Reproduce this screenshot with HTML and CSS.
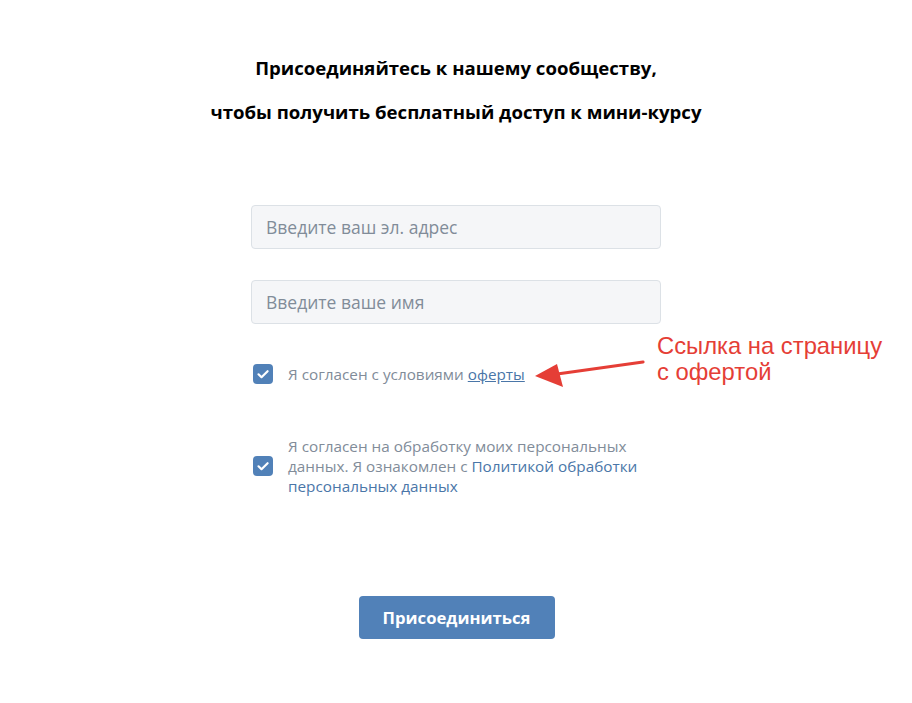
FILE: index.html
```html
<!DOCTYPE html>
<html lang="ru">
<head>
<meta charset="utf-8">
<link rel="stylesheet" href="styles.css">
</head>
<body>
<div class="page">
  <div class="title">
    <p>Присоединяйтесь к нашему сообществу,</p>
    <p>чтобы получить бесплатный доступ к мини-курсу</p>
  </div>
  <form class="form">
    <div class="field">Введите ваш эл. адрес</div>
    <div class="field second">Введите ваше имя</div>
    <div class="check one">
      <span class="box"><svg width="20" height="20" viewBox="0 0 20 20"><path d="M5.5 10.3l3 2.9L14.6 7.2" fill="none" stroke="#fff" stroke-width="2.2" stroke-linecap="round" stroke-linejoin="round"/></svg></span>
      <span class="label">Я согласен с условиями <a class="u">оферты</a></span>
    </div>
    <div class="check two">
      <span class="box"><svg width="20" height="20" viewBox="0 0 20 20"><path d="M5.5 10.3l3 2.9L14.6 7.2" fill="none" stroke="#fff" stroke-width="2.2" stroke-linecap="round" stroke-linejoin="round"/></svg></span>
      <span class="label">Я согласен на обработку моих персональных данных. Я ознакомлен с <a>Политикой обработки персональных данных</a></span>
    </div>
    <div class="actions"><span class="btn">Присоединиться</span></div>
  </form>
  <div class="note">Ссылка на страницу<br>с офертой</div>
  <svg class="arrow" width="120" height="40" viewBox="0 0 120 40">
    <line x1="113" y1="6" x2="20" y2="19" stroke="#e53e36" stroke-width="3.2" stroke-linecap="round"/>
    <polygon points="5,20 27,8 33,31" fill="#e53e36"/>
  </svg>
</div>
</body>
</html>
```
FILE: styles.css
```css
* { box-sizing: border-box; }
html, body { margin: 0; padding: 0; background: #fff; }
body { font-family: "Open Sans", "Noto Sans", sans-serif; }
.page { position: relative; width: 912px; height: 703px; }
.title { padding-top: 46px; text-align: center; }
.title p { margin: 0; font-size: 18.6px; font-weight: 700; color: #000; line-height: 44px; }
.form { width: 410px; margin: 71px auto 0; }
.field { height: 44px; border: 1px solid #dce1e6; border-radius: 4px; background: #f5f6f8; color: #818c99; font-size: 17.5px; padding: 0 14px; line-height: 42px; }
.field.second { margin-top: 31px; }
.check { display: flex; align-items: center; gap: 15px; padding-left: 2px; }
.check.one { margin-top: 40px; }
.check.two { margin-top: 52px; }
.box { width: 20px; height: 20px; border-radius: 4px; background: #5181b8; flex: none; display: block; }
.box svg { display: block; }
.label { font-size: 15.3px; line-height: 20px; color: #818c99; width: 360px; }
.label a { color: #4a76a8; }
.label a.u { text-decoration: underline; }
.actions { display: flex; justify-content: center; margin-top: 100px; padding-left: 1px; }
.btn { display: block; width: 196px; height: 43px; border-radius: 4px; background: #5181b8; color: #fff; font-size: 16.7px; font-weight: 700; text-align: center; line-height: 43px; }
.note { position: absolute; left: 657px; top: 333px; font-family: "Liberation Sans", Arial, sans-serif; font-size: 23.8px; line-height: 26px; color: #e53e36; }
.arrow { position: absolute; left: 530px; top: 356px; }
```
